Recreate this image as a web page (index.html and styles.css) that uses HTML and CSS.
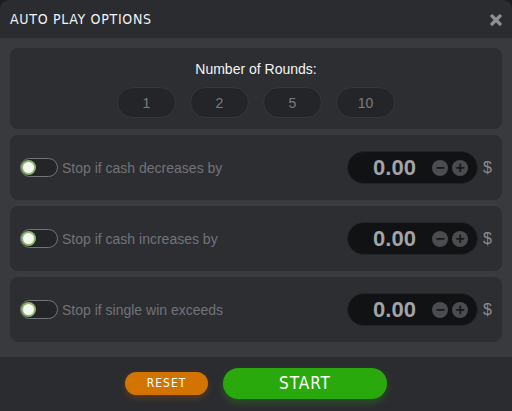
FILE: index.html
```html
<!DOCTYPE html>
<html lang="en">
<head>
    <meta charset="UTF-8">
    <title>Auto Play Options</title>
    <link rel="stylesheet" href="styles.css">
</head>
<body>
    <div class="dialog">
        <div class="dialog-header">
            <span class="dialog-title">AUTO PLAY OPTIONS</span>
            <svg class="close-icon" width="12" height="12" viewBox="0 0 12 12">
                <path d="M2 2 L10 10 M10 2 L2 10" stroke="#8b9097" stroke-width="3.2" stroke-linecap="round"/>
            </svg>
        </div>

        <div class="dialog-body">
            <div class="panel rounds-panel">
                <div class="rounds-label">Number of Rounds:</div>
                <div class="rounds-list">
                    <button class="round-btn">1</button>
                    <button class="round-btn">2</button>
                    <button class="round-btn">5</button>
                    <button class="round-btn">10</button>
                </div>
            </div>

            <div class="panel stop-row">
                <span class="toggle"><span class="knob"></span></span>
                <span class="stop-label">Stop if cash decreases by</span>
                <div class="amount-box">
                    <span class="amount">0.00</span>
                    <span class="step minus">&minus;</span>
                    <span class="step plus">+</span>
                </div>
                <span class="currency">$</span>
            </div>

            <div class="panel stop-row">
                <span class="toggle"><span class="knob"></span></span>
                <span class="stop-label">Stop if cash increases by</span>
                <div class="amount-box">
                    <span class="amount">0.00</span>
                    <span class="step minus">&minus;</span>
                    <span class="step plus">+</span>
                </div>
                <span class="currency">$</span>
            </div>

            <div class="panel stop-row">
                <span class="toggle"><span class="knob"></span></span>
                <span class="stop-label">Stop if single win exceeds</span>
                <div class="amount-box">
                    <span class="amount">0.00</span>
                    <span class="step minus">&minus;</span>
                    <span class="step plus">+</span>
                </div>
                <span class="currency">$</span>
            </div>
        </div>

        <div class="dialog-footer">
            <button class="reset-btn">RESET</button>
            <button class="start-btn">START</button>
        </div>
    </div>
</body>
</html>
```

FILE: styles.css
```css
body {
    margin: 0;
    background: #1c1d20;
    font-family: "Liberation Sans", Arial, sans-serif;
}
.dialog {
    width: 512px;
    height: 411px;
    display: flex;
    flex-direction: column;
    border-radius: 9px 9px 0 0;
    overflow: hidden;
    background: #2b2c30;
}
.dialog-header {
    height: 38px;
    display: flex;
    align-items: center;
    justify-content: space-between;
    padding: 0 10px 0 10px;
    box-sizing: border-box;
}
.dialog-title {
    font-family: "DejaVu Sans Condensed", "DejaVu Sans", sans-serif;
    font-size: 14px;
    letter-spacing: 0.7px;
    color: #f2f2f2;
    margin-top: -1px;
}
.close-icon {
    margin-top: 1px;
}
.dialog-body {
    background: #393a3e;
    padding: 10px 10px 15px 10px;
    display: flex;
    flex-direction: column;
    gap: 6px;
}
.panel {
    background: #2d2e32;
    border-radius: 8px;
}
.rounds-panel {
    height: 81px;
    display: flex;
    flex-direction: column;
    align-items: center;
    padding-top: 13px;
    box-sizing: border-box;
}
.rounds-label {
    color: #f4f4f4;
    font-size: 14px;
    line-height: 16px;
}
.rounds-list {
    display: flex;
    gap: 14px;
    margin-top: 10px;
}
.round-btn {
    width: 59px;
    height: 31px;
    border-radius: 16px;
    background: #242528;
    border: 1px solid #36373b;
    color: #7b7c80;
    font-family: "Liberation Sans", Arial, sans-serif;
    font-size: 14px;
    padding: 0;
}
.stop-row {
    height: 65px;
    display: flex;
    align-items: center;
    padding: 0 10px;
    box-sizing: border-box;
}
.toggle {
    width: 34px;
    height: 17px;
    border: 1.5px solid #737478;
    border-radius: 11px;
    background: #242528;
    display: flex;
    align-items: center;
    padding-left: 2px;
    flex-shrink: 0;
}
.knob {
    width: 11px;
    height: 11px;
    border-radius: 50%;
    background: #f4f6f0;
    box-shadow: 0 0 0 2px #8fb36a;
}
.stop-label {
    color: #727377;
    font-size: 14px;
    margin-left: 4px;
    flex: 1;
}
.amount-box {
    width: 131px;
    height: 33px;
    box-sizing: border-box;
    border-radius: 17px;
    background: #111214;
    border: 1px solid #232427;
    display: flex;
    align-items: center;
    padding-left: 25px;
}
.amount {
    color: #a2a3a5;
    font-weight: bold;
    font-size: 22px;
    width: 59px;
}
.step {
    width: 16px;
    height: 16px;
    border-radius: 50%;
    background: #4b4c50;
    color: #18191b;
    font-weight: bold;
    font-size: 16px;
    line-height: 16px;
    text-align: center;
    margin-right: 4px;
}
.currency {
    color: #8a8b8f;
    font-size: 16px;
    margin-left: 5px;
}
.dialog-footer {
    flex: 1;
    display: flex;
    align-items: center;
    justify-content: center;
    gap: 15px;
    padding-bottom: 2px;
}
.reset-btn {
    width: 83px;
    height: 23px;
    border: none;
    border-radius: 12px;
    background: #d37300;
    color: #fff;
    font-family: "DejaVu Sans Condensed", "DejaVu Sans", sans-serif;
    font-size: 12px;
    letter-spacing: 1px;
    box-shadow: 0 3px 6px rgba(211, 115, 0, 0.25);
}
.start-btn {
    width: 164px;
    height: 31px;
    border: none;
    border-radius: 16px;
    background: #2aa90d;
    color: #fff;
    font-family: "DejaVu Sans Condensed", "DejaVu Sans", sans-serif;
    font-size: 17px;
    letter-spacing: 1px;
    box-shadow: 0 4px 8px rgba(42, 169, 13, 0.3);
}
```
